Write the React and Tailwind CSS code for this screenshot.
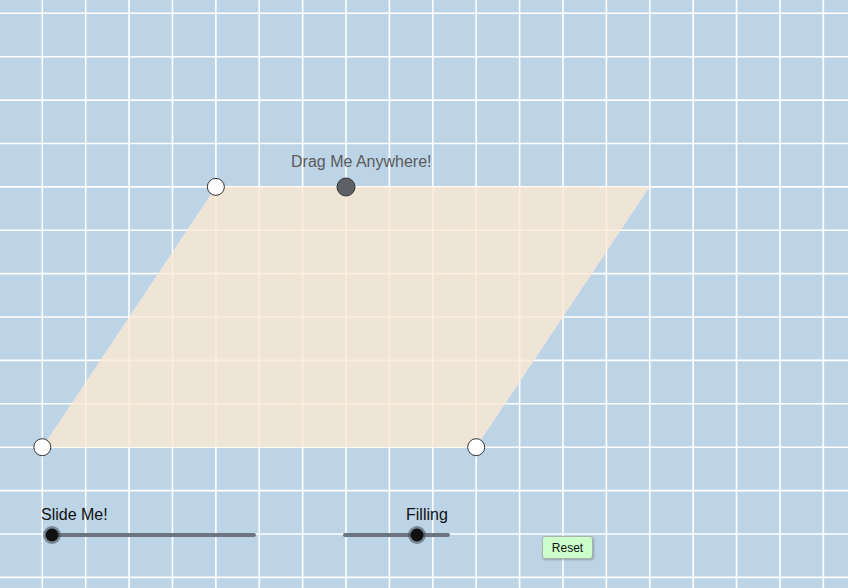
import React from 'react';

const STEP = 43.39;
const X0 = 42.3;
const Y0 = 13.3;

const vLines = Array.from({ length: 20 }, (_, i) => X0 - STEP + i * STEP);
const hLines = Array.from({ length: 15 }, (_, i) => Y0 - STEP + i * STEP);

function Knob({ cx, cy }) {
  return (
    <g>
      <circle cx={cx} cy={cy} r={9} fill="#4a5360" fillOpacity={0.6} />
      <circle cx={cx} cy={cy} r={6.5} fill="#111" />
    </g>
  );
}

export default function App() {
  const poly = [
    [X0, Y0 + 10 * STEP],
    [X0 + 10 * STEP, Y0 + 10 * STEP],
    [X0 + 14 * STEP, Y0 + 4 * STEP],
    [X0 + 4 * STEP, Y0 + 4 * STEP],
  ];

  return (
    <div
      className="relative w-[848px] h-[588px] overflow-hidden bg-[#bdd4e7]"
      style={{ fontFamily: '"Liberation Sans", Arial, sans-serif' }}
    >
      {/* graph canvas */}
      <svg width="848" height="588" className="absolute inset-0">
        {vLines.map((x) => (
          <line key={'v' + x} x1={x} y1={0} x2={x} y2={588} stroke="#fff" strokeWidth={1.6} />
        ))}
        {hLines.map((y) => (
          <line key={'h' + y} x1={0} y1={y} x2={848} y2={y} stroke="#fff" strokeWidth={1.6} />
        ))}
        <polygon
          points={poly.map((p) => p.join(',')).join(' ')}
          fill="#fbe9d3"
          fillOpacity={0.8}
        />

        <circle cx={poly[3][0]} cy={poly[3][1]} r={8.5} fill="#fff" stroke="#333" strokeWidth={1} />
        <circle cx={poly[0][0]} cy={poly[0][1]} r={8.5} fill="#fff" stroke="#333" strokeWidth={1} />
        <circle cx={poly[1][0]} cy={poly[1][1]} r={8.5} fill="#fff" stroke="#333" strokeWidth={1} />
        <circle cx={346} cy={187} r={9} fill="#5d6166" stroke="#333" strokeWidth={1} />

        {/* sliders */}
        <line x1={52} y1={535} x2={254} y2={535} stroke="#6d7680" strokeWidth={4} strokeLinecap="round" />
        <Knob cx={52} cy={535} />
        <line x1={345} y1={535} x2={448} y2={535} stroke="#6d7680" strokeWidth={4} strokeLinecap="round" />
        <Knob cx={417} cy={535} />
      </svg>

      <div className="absolute left-[291px] top-[152px] text-[16px] leading-[20px] text-[#5a5a5a] whitespace-nowrap">
        Drag Me Anywhere!
      </div>
      <div className="absolute left-[41px] top-[505px] text-[16px] leading-[20px] text-[#111] whitespace-nowrap">
        Slide Me!
      </div>
      <div className="absolute left-[406px] top-[505px] text-[16px] leading-[20px] text-[#111] whitespace-nowrap">
        Filling
      </div>

      <button className="absolute left-[542px] top-[536px] w-[51px] h-[23px] rounded-[3px] border border-[#a9b3a9] bg-[#ccffcc] shadow-[1px_1px_2px_rgba(0,0,0,0.25)] text-[12px] leading-none text-[#111]">
        Reset
      </button>
    </div>
  );
}
